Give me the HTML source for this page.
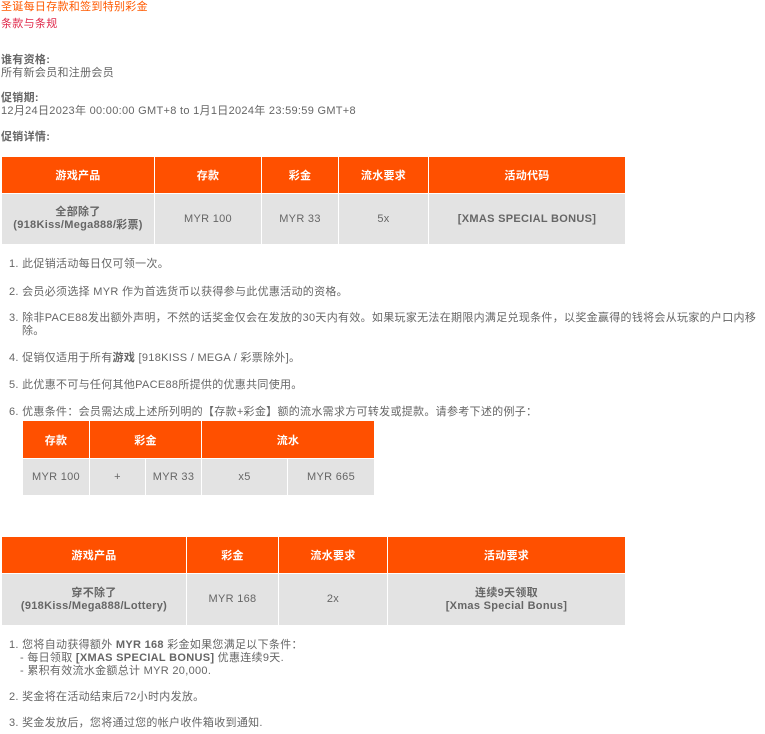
<!DOCTYPE html>
<html><head><meta charset="utf-8"><style>
body{margin:0;width:765px;height:734px;background:#fff;font-family:"Liberation Sans","Noto Sans CJK SC",sans-serif;font-size:11px;color:#666;position:relative;overflow:hidden;letter-spacing:0.3px}
.a{position:absolute;white-space:nowrap;line-height:13px}
b{font-weight:bold}
table{position:absolute;border-collapse:collapse;table-layout:fixed}
td{padding:0;text-align:center;line-height:13px;border:1px solid #fff}
th{background:#ff5000;color:#fff;font-weight:bold;border:1px solid #fff;padding:0}
td{background:#e3e3e3}
</style></head><body>
<div class="a" style="left:1px;top:1px;color:#ff5a00">圣诞每日存款和签到特别彩金</div>
<div class="a" style="left:1px;top:18px;color:#e0284a">条款与条规</div>
<div class="a" style="left:1px;top:54px"><b>谁有资格:</b></div>
<div class="a" style="left:1px;top:67px">所有新会员和注册会员</div>
<div class="a" style="left:1px;top:92px"><b>促销期:</b></div>
<div class="a" style="left:1px;top:105px">12月24日2023年 00:00:00 GMT+8 to 1月1日2024年 23:59:59 GMT+8</div>
<div class="a" style="left:1px;top:131px"><b>促销详情:</b></div>

<table style="left:1px;top:156px;width:624px">
<colgroup><col style="width:153px"><col style="width:107px"><col style="width:77px"><col style="width:90px"><col style="width:197px"></colgroup>
<tr style="height:37px"><th>游戏产品</th><th>存款</th><th>彩金</th><th>流水要求</th><th>活动代码</th></tr>
<tr style="height:51px"><td><b>全部除了<br>(918Kiss/Mega888/彩票)</b></td><td>MYR 100</td><td>MYR 33</td><td>5x</td><td><b>[XMAS SPECIAL BONUS]</b></td></tr>
</table>

<div class="a" style="left:9px;top:258px">1. 此促销活动每日仅可领一次。</div>
<div class="a" style="left:9px;top:286px">2. 会员必须选择 MYR 作为首选货币以获得参与此优惠活动的资格。</div>
<div class="a" style="left:9px;top:312px">3. 除非PACE88发出额外声明，不然的话奖金仅会在发放的30天内有效。如果玩家无法在期限内满足兑现条件，以奖金赢得的钱将会从玩家的户口内移</div>
<div class="a" style="left:22px;top:325px">除。</div>
<div class="a" style="left:9px;top:352px">4. 促销仅适用于所有<b>游戏</b> [918KISS / MEGA / 彩票除外]。</div>
<div class="a" style="left:9px;top:379px">5. 此优惠不可与任何其他PACE88所提供的优惠共同使用。</div>
<div class="a" style="left:9px;top:406px">6. 优惠条件：会员需达成上述所列明的【存款+彩金】额的流水需求方可转发或提款。请参考下述的例子：</div>

<table style="left:22px;top:420px;width:352px">
<colgroup><col style="width:67px"><col style="width:56px"><col style="width:56px"><col style="width:86px"><col style="width:87px"></colgroup>
<tr style="height:38px"><th>存款</th><th colspan="2">彩金</th><th colspan="2">流水</th></tr>
<tr style="height:37px"><td>MYR 100</td><td>+</td><td>MYR 33</td><td>x5</td><td>MYR 665</td></tr>
</table>

<table style="left:1px;top:536px;width:624px">
<colgroup><col style="width:185px"><col style="width:92px"><col style="width:109px"><col style="width:238px"></colgroup>
<tr style="height:37px"><th>游戏产品</th><th>彩金</th><th>流水要求</th><th>活动要求</th></tr>
<tr style="height:52px"><td><b>穿不除了<br>(918Kiss/Mega888/Lottery)</b></td><td>MYR 168</td><td>2x</td><td><b>连续9天领取<br>[Xmas Special Bonus]</b></td></tr>
</table>

<div class="a" style="left:9px;top:639px">1. 您将自动获得额外 <b>MYR 168</b> 彩金如果您满足以下条件：</div>
<div class="a" style="left:20px;top:652px">- 每日领取 <b>[XMAS SPECIAL BONUS]</b> 优惠连续9天.</div>
<div class="a" style="left:20px;top:665px">- 累积有效流水金额总计 MYR 20,000.</div>
<div class="a" style="left:9px;top:691px">2. 奖金将在活动结束后72小时内发放。</div>
<div class="a" style="left:9px;top:717px">3. 奖金发放后，您将通过您的帐户收件箱收到通知.</div>
</body></html>
